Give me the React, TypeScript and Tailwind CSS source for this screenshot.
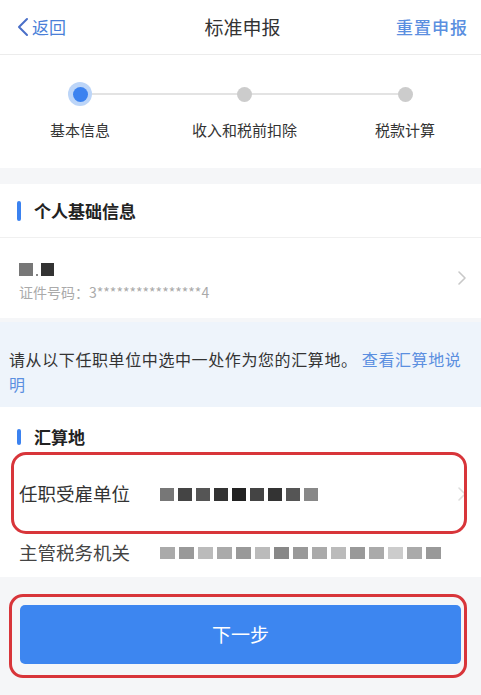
import React from "react";

const font = { fontFamily: '"Noto Sans CJK SC", "Noto Sans", sans-serif' };

function Blocks({ shades, h, w }: { shades: string[]; h: number; w: number }) {
  return (
    <div className="flex items-center">
      {shades.map((c, i) => (
        <div key={i} style={{ background: c, width: w, height: h, marginRight: 4 }} />
      ))}
    </div>
  );
}

function Chevron({ color = "#c8c8c8" }: { color?: string }) {
  return (
    <svg width="10" height="16" viewBox="0 0 10 16" fill="none">
      <path d="M2 2l6 6-6 6" stroke={color} strokeWidth="1.6" strokeLinecap="round" strokeLinejoin="round" />
    </svg>
  );
}

export default function App() {
  return (
    <div className="relative w-[481px] h-[695px] bg-[#f5f6f8] overflow-hidden" style={font}>
      {/* header */}
      <div className="h-[55px] bg-white grid grid-cols-[1fr_auto_1fr] items-center pl-[17px] pr-[13px] border-b border-[#ececec]">
        <div className="flex items-center gap-[3px] text-[#4a7fd8] text-[17px]">
          <svg width="12" height="20" viewBox="0 0 12 20" fill="none">
            <path d="M10 2L2 10l8 8" stroke="#4a6fc8" strokeWidth="2" strokeLinecap="round" strokeLinejoin="round" />
          </svg>
          <span>返回</span>
        </div>
        <div className="text-[19px] text-[#333]">标准申报</div>
        <div className="text-right text-[17px] text-[#5b8fe0] font-medium tracking-[1px]">重置申报</div>
      </div>

      {/* steps */}
      <div className="h-[113px] bg-white relative">
        <div className="absolute top-[38px] left-[80px] right-[78px] h-[2px] bg-[#e3e3e3]" />
        <div className="relative flex justify-between px-[36px] pt-[27px]">
          <div className="flex flex-col items-center w-[88px]">
            <div className="w-[24px] h-[24px] rounded-full bg-[#bcd5f8] flex items-center justify-center">
              <div className="w-[15px] h-[15px] rounded-full bg-[#3b82f0]" />
            </div>
            <div className="mt-[13px] text-[15px] text-[#333]">基本信息</div>
          </div>
          <div className="flex flex-col items-center w-[120px]">
            <div className="w-[24px] h-[24px] flex items-center justify-center">
              <div className="w-[15px] h-[15px] rounded-full bg-[#cccccc]" />
            </div>
            <div className="mt-[13px] text-[15px] text-[#333]">收入和税前扣除</div>
          </div>
          <div className="flex flex-col items-center w-[80px]">
            <div className="w-[24px] h-[24px] flex items-center justify-center">
              <div className="w-[15px] h-[15px] rounded-full bg-[#cccccc]" />
            </div>
            <div className="mt-[13px] text-[15px] text-[#333]">税款计算</div>
          </div>
        </div>
      </div>

      <div className="h-[16px]" />

      {/* section personal */}
      <div className="bg-white">
        <div className="h-[54px] flex items-center pl-[17px] border-b border-[#f0f0f0]">
          <div className="w-[4px] h-[20px] rounded-[2px] bg-[#3b82f0]" />
          <div className="ml-[13px] text-[17px] font-bold text-[#222]">个人基础信息</div>
        </div>
        <div className="h-[80px] flex items-center justify-between pl-[19px] pr-[14px]">
          <div className="flex flex-col">
            <div className="flex items-end gap-[3px] h-[22px]">
              <div className="w-[14px] h-[13px] bg-[#555] opacity-80" />
              <div className="w-[2px] h-[2px] bg-[#888]" />
              <div className="w-[13px] h-[13px] bg-[#333]" />
            </div>
            <div className="mt-[6px] text-[14px] text-[#aaa]">证件号码：3****************4</div>
          </div>
          <Chevron />
        </div>
      </div>

      {/* info */}
      <div className="bg-[#eef4fb] mt-[4px] pt-[25px] pb-[10px] pl-[9px] pr-[8px] text-[16px] tracking-[0.6px] leading-[25px] text-[#333] whitespace-nowrap">
        <div>
          <span>请从以下任职单位中选中一处作为您的汇算地。 </span>
          <span className="text-[#5b8fe0]">查看汇算地说</span>
        </div>
        <div className="text-[#5b8fe0]">明</div>
      </div>

      {/* section 汇算地 */}
      <div className="bg-white">
        <div className="h-[52px] flex items-center pl-[17px] pt-[8px]">
          <div className="w-[4px] h-[16px] rounded-[2px] bg-[#3b82f0]" />
          <div className="ml-[13px] text-[17px] font-bold text-[#222]">汇算地</div>
        </div>
        <div className="h-[70px] flex items-center justify-between pl-[19px] pr-[14px]">
          <div className="flex items-center">
            <div className="w-[141px] text-[18.5px] text-[#333]">任职受雇单位</div>
            <Blocks shades={["#777", "#444", "#555", "#333", "#222", "#444", "#333", "#555", "#888"]} h={13} w={14} />
          </div>
          <Chevron color="#dddddd" />
        </div>
        <div className="h-[48px] flex items-center pl-[19px] pr-[14px]">
          <div className="w-[141px] text-[18.5px] text-[#444]">主管税务机关</div>
          <Blocks
            shades={["#aaa", "#999", "#bbb", "#aaa", "#999", "#bbb", "#888", "#999", "#aaa", "#bbb", "#999", "#aaa", "#ccc", "#aaa", "#999"]}
            h={12}
            w={15}
          />
        </div>
      </div>

      {/* bottom button */}
      <div className="pt-[28px] px-[20px]">
        <div className="h-[59px] rounded-[5px] bg-[#3d86f0] flex items-center justify-center text-white text-[19px]">
          下一步
        </div>
      </div>

      {/* red annotations */}
      <div className="absolute left-[11px] top-[452px] w-[456px] h-[82px] rounded-[15px] border-[3px] border-[#d8353a] pointer-events-none" />
      <div className="absolute left-[9px] top-[594px] w-[458px] h-[84px] rounded-[14px] border-[3px] border-[#d8353a] pointer-events-none" />
    </div>
  );
}
